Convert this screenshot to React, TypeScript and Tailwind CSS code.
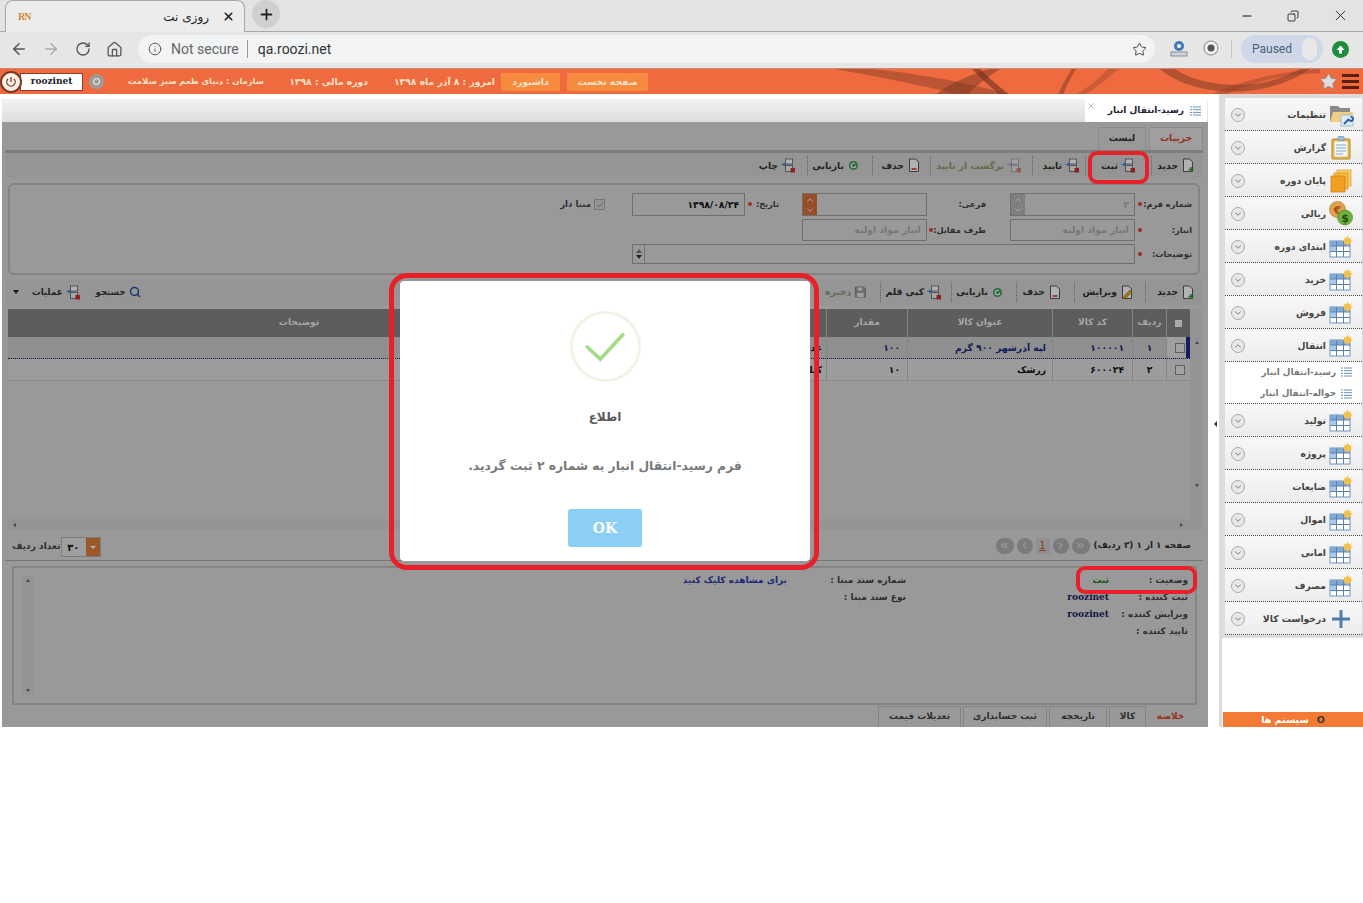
import { ArrowLeft, ArrowRight, RotateCw, Home, Info, Star, Minus, Copy, X, Plus, ChevronDown, ChevronUp, Search, ChevronsLeft, ChevronsRight, ChevronLeft, ChevronRight, Check } from 'lucide-react'

// small toolbar glyphs
function ToolIcon({ faded }: { faded?: boolean }) {
  return (
    <svg width="15" height="15" viewBox="0 0 15 15" className={faded ? 'opacity-50' : ''}>
      <rect x="4.5" y="1" width="7" height="5" fill="#fff" stroke="#778" strokeWidth="1" />
      <rect x="4.5" y="7.5" width="7" height="6" fill="#eee" stroke="#778" strokeWidth="1" />
      <path d="M0.5 6h2V4.5l2.5 2-2.5 2V7h-2z" fill="#2f7fd0" />
      <rect x="9.5" y="10" width="4.5" height="4.5" fill="#c9302c" />
    </svg>
  )
}

function NewIcon() {
  return (
    <svg width="14" height="15" viewBox="0 0 14 15">
      <path d="M2.5 1h6l3 3v9.5h-9z" fill="#fff" stroke="#556" strokeWidth="1" />
      <path d="M10 9v5M7.5 11.5h5" stroke="#2e9e3e" strokeWidth="1.6" />
    </svg>
  )
}

function DeleteIcon() {
  return (
    <svg width="14" height="15" viewBox="0 0 14 15">
      <path d="M2.5 1h6l3 3v9.5h-9z" fill="#fff" stroke="#556" strokeWidth="1" />
      <path d="M4.5 11h5" stroke="#d9302c" strokeWidth="1.6" />
    </svg>
  )
}

function RefreshIcon() {
  return (
    <svg width="13" height="13" viewBox="0 0 13 13">
      <circle cx="6.5" cy="6.5" r="4.5" fill="#3f9e56" />
      <path d="M8.7 6.5a2.2 2.2 0 1 1-1-1.8" fill="none" stroke="#fff" strokeWidth="1.2" />
    </svg>
  )
}

function EditIcon() {
  return (
    <svg width="15" height="15" viewBox="0 0 15 15">
      <path d="M2.5 1h6l3 3v9.5h-9z" fill="#fff" stroke="#556" strokeWidth="1" />
      <path d="M3 14l1-3 6-6 2 2-6 6z" fill="#e6a817" stroke="#8a6510" strokeWidth="0.5" />
    </svg>
  )
}

function SaveIcon() {
  return (
    <svg width="14" height="14" viewBox="0 0 14 14" className="opacity-60">
      <path d="M1.5 1.5h9l2 2v9h-11z" fill="#777" stroke="#444" />
      <rect x="4" y="2" width="5" height="3.5" fill="#eee" />
      <rect x="3.5" y="8" width="7" height="4.5" fill="#eee" />
    </svg>
  )
}

function ListIcon() {
  return (
    <svg width="11" height="10" viewBox="0 0 11 10">
      <path d="M0 1h2M3 1h8M0 3.7h2M3 3.7h8M0 6.4h2M3 6.4h8M0 9h2M3 9h8" stroke="#6a8fb5" strokeWidth="1" />
    </svg>
  )
}

// sidebar glyphs
function TableIcon() {
  return (
    <svg width="24" height="22" viewBox="0 0 24 22">
      <rect x="1" y="5" width="20" height="16" fill="#fff" stroke="#6f92b8" />
      <rect x="1" y="5" width="20" height="5" fill="#7fa9d6" />
      <rect x="1" y="10" width="6.5" height="5.5" fill="#a9c8ea" />
      <path d="M1 10h20M1 15.5h20M7.5 5v16M14.5 5v16" stroke="#5a82ad" strokeWidth="1" />
      <circle cx="18.5" cy="5" r="3.6" fill="#f2c24a" />
      <path d="M18.5 0v10M13.5 5h10M15 1.5l7 7M22 1.5l-7 7" stroke="#f2c24a" strokeWidth="1" />
    </svg>
  )
}

function SettingsIcon() {
  return (
    <svg width="25" height="24" viewBox="0 0 25 24">
      <path d="M1 3h8l2 2h10v14H1z" fill="#8a8a8a" />
      <path d="M1 19l3-10h20l-3 10z" fill="#f0cf85" />
      <rect x="12" y="12" width="12" height="11" fill="#dcebf8" stroke="#9ab" strokeWidth="0.7" />
      <path d="M15 21l5-5M20 16a2 2 0 1 0 1.5-2" stroke="#2e62a8" strokeWidth="2" fill="none" />
    </svg>
  )
}

function ReportIcon() {
  return (
    <svg width="20" height="24" viewBox="0 0 20 24">
      <rect x="1" y="3" width="18" height="20" rx="1" fill="#e3b94f" stroke="#b28a28" />
      <rect x="3.5" y="5.5" width="13" height="15" fill="#f4f8fb" />
      <path d="M5 9h10M5 12h10M5 15h10M5 18h7" stroke="#7fa6c4" strokeWidth="1" />
      <rect x="7" y="0.5" width="6" height="4" rx="1" fill="#9cc0dd" stroke="#6f92b0" strokeWidth="0.7" />
    </svg>
  )
}

function StackIcon() {
  return (
    <svg width="22" height="24" viewBox="0 0 22 24">
      <rect x="7" y="1" width="14" height="16" fill="#f7cf6a" stroke="#d39b2c" strokeWidth="0.7" />
      <rect x="4" y="4" width="14" height="16" fill="#f6bb44" stroke="#d3902c" strokeWidth="0.7" />
      <rect x="1" y="7" width="14" height="16" fill="#f2a01f" stroke="#c97f14" strokeWidth="0.7" />
    </svg>
  )
}

function CoinsIcon() {
  return (
    <svg width="24" height="25" viewBox="0 0 24 25">
      <circle cx="8.5" cy="8.5" r="8" fill="#e0a24c" stroke="#b67a2a" strokeWidth="0.7" />
      <text x="8.5" y="12.5" fontSize="11" fontWeight="700" textAnchor="middle" fill="#a8481c">€</text>
      <circle cx="16" cy="16.5" r="7.5" fill="#6fb03c" stroke="#4b8a24" strokeWidth="0.7" />
      <text x="16" y="20.5" fontSize="11" fontWeight="700" textAnchor="middle" fill="#1d4d12">$</text>
    </svg>
  )
}

function PlusIcon() {
  return (
    <svg width="20" height="18" viewBox="0 0 20 18">
      <path d="M0 9h18M9 0v18" stroke="#4e7da8" strokeWidth="3" transform="translate(1 0)" />
    </svg>
  )
}

const toolbar1 = [
  { label: 'جدید', icon: <NewIcon />, w: 'w-[49px]', pr: 'pr-[5px]' },
  { label: 'ثبت', icon: <ToolIcon />, w: 'w-[66px]', pr: 'pr-[15px]' },
  { label: 'تایید', icon: <ToolIcon />, w: 'w-[53px]', pr: 'pr-[5px]' },
  { label: 'برگشت از تایید', icon: <ToolIcon faded />, w: 'w-[102px]', pr: 'pr-[10px]', faded: true },
  { label: 'حذف', icon: <DeleteIcon />, w: 'w-[58px]', pr: 'pr-[9px]' },
  { label: 'بازیابی', icon: <RefreshIcon />, w: 'w-[65px]', pr: 'pr-[12px]' },
  { label: 'چاپ', icon: <ToolIcon />, w: 'w-[55px]', pr: 'pr-[11px]', last: true },
]

const toolbar2 = [
  { label: 'جدید', icon: <NewIcon />, w: 'w-[55px]', pr: 'pr-[5px]' },
  { label: 'ویرایش', icon: <EditIcon />, w: 'w-[71px]', pr: 'pr-[10px]' },
  { label: 'حذف', icon: <DeleteIcon />, w: 'w-[58px]', pr: 'pr-[12px]' },
  { label: 'بازیابی', icon: <RefreshIcon />, w: 'w-[65px]', pr: 'pr-[12px]' },
  { label: 'کپی قلم', icon: <ToolIcon />, w: 'w-[71px]', pr: 'pr-[9px]' },
  { label: 'ذخیره', icon: <SaveIcon />, w: 'w-[55px]', pr: 'pr-[13px]', faded: true, last: true },
]

const menu = [
  { label: 'تنظیمات', icon: <SettingsIcon /> },
  { label: 'گزارش', icon: <ReportIcon /> },
  { label: 'پایان دوره', icon: <StackIcon /> },
  { label: 'ریالی', icon: <CoinsIcon /> },
  { label: 'ابتدای دوره', icon: <TableIcon /> },
  { label: 'خرید', icon: <TableIcon /> },
  { label: 'فروش', icon: <TableIcon /> },
  { label: 'انتقال', icon: <TableIcon />, open: true },
  { label: 'تولید', icon: <TableIcon /> },
  { label: 'پروژه', icon: <TableIcon /> },
  { label: 'ضایعات', icon: <TableIcon /> },
  { label: 'اموال', icon: <TableIcon /> },
  { label: 'امانی', icon: <TableIcon /> },
  { label: 'مصرف', icon: <TableIcon /> },
  { label: 'درخواست کالا', icon: <PlusIcon /> },
]

function ToolbarItem({ label, icon, w, pr, faded, last }: { label: string; icon: React.ReactNode; w: string; pr: string; faded?: boolean; last?: boolean }) {
  return (
    <div className={`${w} ${pr} h-[19px] shrink-0 flex items-center gap-[3px] ${last ? '' : 'border-l border-dotted border-[#888]'}`}>
      {icon}
      <span className={`text-[9.2px] font-bold whitespace-nowrap ${faded ? 'text-[#8d9a70]' : 'text-[#333]'}`}>{label}</span>
    </div>
  )
}

function Label({ text, w, pr, dot = true }: { text: string; w: string; pr: string; dot?: boolean }) {
  return (
    <div className={`${w} ${pr} pl-[3px] shrink-0 flex items-center justify-between text-[8.2px] font-bold text-[#444] whitespace-nowrap`}>
      <span>{text}</span>
      {dot && <span className="w-[4px] h-[4px] shrink-0 rounded-full bg-[#e0402a]" />}
    </div>
  )
}

function Input({ w, h = 'h-[22px]', value, strong, children }: { w: string; h?: string; value?: string; strong?: boolean; children?: React.ReactNode }) {
  return (
    <div className={`${w} ${h} shrink-0 border border-[#9f9f9f] bg-[#dcdcdc] flex items-center justify-between pr-[5px] text-[9.2px] font-bold ${strong ? 'text-[#111]' : 'text-[#aaa]'}`}>
      <span className="whitespace-nowrap">{value}</span>
      {children}
    </div>
  )
}

function GridCell({ w, children, className = '' }: { w: string; children?: React.ReactNode; className?: string }) {
  return <div className={`${w} shrink-0 h-full flex items-center border-l border-[#bdbdbd] ${className}`}>{children}</div>
}

export default function App() {
  return (
    <div className="relative w-[1363px] h-[903px] bg-white overflow-hidden font-['DejaVu_Sans',sans-serif]">
      {/* browser tab strip */}
      <div className="h-[32px] bg-[#e3e3e3] flex items-end pl-[5px] border-b border-[#a8a8a8]">
        <div className="w-[240px] h-[32px] -mb-px bg-[#ececec] rounded-t-[8px] border border-b-0 border-[#a8a8a8] flex items-center pl-[12px] pr-[9px]">
          <span className="text-[10px] font-bold text-[#d08a3c] tracking-[-1px] font-['Liberation_Serif',serif]">RN</span>
          <span className="ml-auto text-[12px] text-[#222] mr-[13px]" dir="rtl">روزی نت</span>
          <X size={13} strokeWidth={3} className="text-[#222]" />
        </div>
        <div className="w-[28px] h-[28px] rounded-full bg-[#d0d0d0] ml-[7px] mb-[3px] flex items-center justify-center">
          <Plus size={17} strokeWidth={2.5} className="text-[#222]" />
        </div>
        <div className="ml-auto h-full flex items-center text-[#111]">
          <Minus size={14} strokeWidth={1.8} className="mr-[33px]" />
          <Copy size={12} strokeWidth={1.6} className="mr-[33px] -scale-x-100" />
          <X size={17} strokeWidth={1.2} className="mr-[14px]" />
        </div>
      </div>

      {/* address bar */}
      <div className="h-[36px] bg-[#e6e6e6] flex items-center pl-[10px] pb-[2px] text-[#555] font-['Roboto',sans-serif]">
        <ArrowLeft size={18} strokeWidth={2} />
        <ArrowRight size={18} strokeWidth={2} className="ml-[14px] text-[#aaa]" />
        <RotateCw size={16} strokeWidth={2} className="ml-[15px]" />
        <Home size={17} strokeWidth={1.8} className="ml-[15px]" />
        <div className="ml-[15px] w-[1017px] h-[28px] rounded-full bg-[#f1f3f4] flex items-center pl-[10px] pr-[8px]">
          <Info size={14} strokeWidth={1.6} />
          <span className="ml-[9px] text-[14px] text-[#666]">Not secure</span>
          <span className="ml-[8px] w-px h-[18px] bg-[#999]" />
          <span className="ml-[10px] text-[14px] text-[#333]">qa.roozi.net</span>
          <Star size={15} strokeWidth={1.6} className="ml-auto text-[#444]" />
        </div>
        <svg width="18" height="18" viewBox="0 0 18 18" className="ml-[15px]">
          <circle cx="9" cy="6" r="5" fill="#3f78b8" />
          <rect x="1" y="12" width="16" height="4" fill="#d0d4d8" stroke="#557" strokeWidth="0.6" />
          <circle cx="9" cy="6" r="2" fill="#fff" />
        </svg>
        <svg width="18" height="18" viewBox="0 0 18 18" className="ml-[14px]">
          <circle cx="9" cy="8" r="7" fill="#eee" stroke="#888" />
          <circle cx="9" cy="8" r="3.5" fill="#555" />
        </svg>
        <span className="ml-[11px] w-px h-[18px] bg-[#c4c4c4]" />
        <div className="ml-[9px] w-[82px] h-[28px] rounded-full bg-[#cfd8e6] flex items-center pl-[11px] text-[12px] text-[#48627f]">
          Paused
          <span className="ml-[10px] w-[15px] h-[22px] rounded-full bg-[#e8e8e8]" />
        </div>
        <div className="ml-[9px] w-[17px] h-[17px] rounded-full bg-[#1e8e3e] flex items-center justify-center">
          <svg width="9" height="9" viewBox="0 0 9 9"><path d="M4.5 0.5L8.5 5H6v3.5H3V5H0.5z" fill="#fff" /></svg>
        </div>
      </div>

      {/* app header */}
      <div className="relative h-[26px] bg-[#ef6a3e] border-t border-[#c98872] flex items-center overflow-hidden">
        <svg width="1363" height="26" viewBox="0 0 1363 26" className="absolute left-0 top-0">
          <path d="M835 0C880 8 930 18 960 26H1010C975 14 900 2 870 0z" fill="#8a3f28" opacity="0.5" />
          <path d="M935 26C950 14 975 4 990 0L1000 0C985 10 972 20 968 26z" fill="#7a3722" opacity="0.5" />
          <path d="M980 0C990 10 1002 20 1010 26L1000 26C990 18 980 8 972 0z" fill="#6d3120" opacity="0.6" />
          <path d="M1058 26C1062 16 1068 6 1072 0L1076 0C1071 8 1066 18 1063 26z" fill="#7a3722" opacity="0.5" />
          <path d="M1085 26C1100 16 1112 6 1118 0L1108 0C1100 8 1090 18 1075 26z" fill="#a24a2e" opacity="0.45" />
          <path d="M1160 0C1190 26 1260 34 1310 0L1300 0C1260 24 1200 18 1175 0z" fill="#7a3722" opacity="0.5" />
          <path d="M1225 26C1250 14 1280 6 1320 4L1320 0C1280 2 1240 12 1210 26z" fill="#8a3f28" opacity="0.4" />
        </svg>
        <div className="relative flex items-center w-full h-full">
          <div className="w-[22px] h-[22px] rounded-full bg-[#fdf1e6] border-2 border-[#7a3a24] flex items-center justify-center z-10">
            <svg width="12" height="12" viewBox="0 0 12 12"><path d="M6 1v5M3 3a4.2 4.2 0 1 0 6 0" fill="none" stroke="#6d3120" strokeWidth="1.2" /></svg>
          </div>
          <div className="w-[63px] h-[18px] -ml-[2px] bg-white border border-[#8a3f28] flex items-center justify-center text-[9px] font-bold font-['DejaVu_Serif',serif] text-[#222]">roozinet</div>
          <div className="ml-[6px] w-[15px] h-[15px] rounded-full bg-[#a09a96] flex items-center justify-center">
            <span className="w-[7px] h-[7px] rounded-full border border-white" />
          </div>
          <span className="ml-[24px] w-[136px] text-center text-[8.4px] font-bold text-[#fbe3c8] whitespace-nowrap" dir="rtl">سازمان : دنیای طعم سبز سلامت</span>
          <span className="ml-[26px] w-[78px] text-center text-[9.2px] font-bold text-[#fbe3c8] whitespace-nowrap" dir="rtl">دوره مالی : ۱۳۹۸</span>
          <span className="ml-[25px] w-[103px] text-center text-[9.2px] font-bold text-[#fbe3c8] whitespace-nowrap" dir="rtl">امروز : ۸ آذر ماه ۱۳۹۸</span>
          <div className="ml-[5px] w-[59px] h-[18px] bg-[#f68a3e] flex items-center justify-center text-[9.2px] font-bold text-[#fbe3c8]">داشبورد</div>
          <div className="ml-[7px] w-[81px] h-[18px] bg-[#f68a3e] flex items-center justify-center text-[9.2px] font-bold text-[#fbe3c8]">صفحه نخست</div>
          <Star size={19} strokeWidth={1} className="ml-auto text-[#888] fill-[#ddd]" />
          <div className="ml-[4px] mr-[4px] w-[17px] flex flex-col gap-[3px]">
            <span className="h-[3px] bg-[#5a1f14]" />
            <span className="h-[3px] bg-[#5a1f14]" />
            <span className="h-[3px] bg-[#5a1f14]" />
          </div>
        </div>
      </div>

      {/* app body */}
      <div className="h-[633px] flex pl-[2px]" dir="ltr">
        <div className="w-[1206px] flex flex-col" dir="rtl">
          <div className="h-[5px]" />
          {/* open pages strip */}
          <div className="h-[23px] bg-gradient-to-b from-[#f2f2f2] to-[#dddddd] flex pr-[1px]">
            <div className="w-[122px] h-full bg-white flex items-center pr-[6px] gap-[6px] relative">
              <ListIcon />
              <span className="text-[9px] font-bold text-[#223] whitespace-nowrap">رسید-انتقال انبار</span>
              <X size={10} strokeWidth={1.5} className="absolute left-[1px] top-[2px] text-[#999]" />
            </div>
          </div>

          {/* page, dimmed by the modal backdrop */}
          <div className="relative flex-1 bg-[#dbdbdb] flex flex-col pl-[3px] pr-[5px] overflow-hidden">
            <div className="h-[28px] flex items-end gap-[3px] border-b-[3px] border-[#b4b4b4] box-content">
              <div className="w-[54px] h-[23px] pb-[2px] bg-[#e4e4e4] border border-b-0 border-[#c8c8c8] flex items-center justify-center text-[9.2px] font-bold text-[#d8472e]">جزییات</div>
              <div className="w-[48px] h-[23px] pb-[2px] bg-[#dcdcdc] border border-b-0 border-[#c8c8c8] flex items-center justify-center text-[9.2px] font-bold text-[#333]">لیست</div>
            </div>
            <div className="h-[25px] bg-[#d6d6d6] flex items-center pr-[3px]">
              {toolbar1.map(t => <ToolbarItem key={t.label} {...t} />)}
            </div>

            <div className="mt-[5px] mx-[3px] h-[92px] border-[2px] border-[#bdbdbd] rounded-[6px] flex flex-col gap-[3px] pt-[8px] pr-[6px]">
              <div className="flex items-center">
                <Label text="شماره فرم:" w="w-[57px]" pr="pr-0" />
                <Input w="w-[125px]" h="h-[23px]" value="۲">
                  <div className="w-[14px] h-full bg-[#b5b5b5] flex flex-col items-center justify-center text-white">
                    <ChevronUp size={10} /><ChevronDown size={10} />
                  </div>
                </Input>
                <Label text="فرعی:" w="w-[83px]" pr="pr-[24px]" dot={false} />
                <Input w="w-[125px]" h="h-[23px]">
                  <div className="w-[14px] h-full bg-[#d8703c] flex flex-col items-center justify-center text-white">
                    <ChevronUp size={10} /><ChevronDown size={10} />
                  </div>
                </Input>
                <Label text="تاریخ:" w="w-[57px]" pr="pr-[23px]" />
                <Input w="w-[113px]" h="h-[23px]" value="۱۳۹۸/۰۸/۲۴" strong />
                <div className="mr-[27px] w-[11px] h-[11px] border border-[#aaa] bg-[#d5d5d5] flex items-center justify-center">
                  <Check size={8} strokeWidth={2} className="text-[#666]" />
                </div>
                <span className="mr-[3px] text-[8.6px] font-bold text-[#444] whitespace-nowrap">مبنا دار</span>
              </div>
              <div className="flex items-center">
                <Label text="انبار:" w="w-[57px]" pr="pr-0" />
                <Input w="w-[125px]" value="انبار مواد اولیه" />
                <Label text="طرف مقابل:" w="w-[83px]" pr="pr-[24px]" />
                <Input w="w-[125px]" value="انبار مواد اولیه" />
              </div>
              <div className="flex items-center">
                <Label text="توضیحات:" w="w-[57px]" pr="pr-0" />
                <Input w="w-[503px]" h="h-[20px]">
                  <div className="w-[12px] h-full flex flex-col items-center justify-center border-r border-[#aaa]">
                    <span className="w-0 h-0 border-x-[3px] border-x-transparent border-b-[4px] border-b-[#777]" />
                    <span className="mt-[2px] w-0 h-0 border-x-[3px] border-x-transparent border-t-[4px] border-t-[#333]" />
                  </div>
                </Input>
              </div>
            </div>

            <div className="mt-[4px] h-[26px] bg-[#d6d6d6] flex items-center pr-[3px]">
              {toolbar2.map(t => <ToolbarItem key={t.label} {...t} />)}
              <div className="mr-auto flex items-center pl-[8px] gap-[3px]">
                <Search size={12} strokeWidth={3} className="text-[#1f4f9e]" />
                <span className="text-[8.6px] font-bold text-[#333]">جستجو</span>
                <span className="w-[9px]" />
                <ToolIcon />
                <span className="text-[8.6px] font-bold text-[#333]">عملیات</span>
                <span className="mr-[10px] w-0 h-0 border-x-[3px] border-x-transparent border-t-[4px] border-t-[#222]" />
              </div>
            </div>

            {/* grid */}
            <div className="mt-[4px] ml-[3px] h-[221px] flex flex-col bg-[#dbdbdb] relative">
              <div className="flex-1 flex">
                <div className="w-[13px] shrink-0 bg-[#d4d4d4] flex flex-col items-center justify-between py-[32px]">
                  <span className="w-0 h-0 border-x-[2px] border-x-transparent border-b-[3px] border-b-[#666]" />
                  <span className="w-0 h-0 border-x-[2px] border-x-transparent border-t-[3px] border-t-[#666]" />
                </div>
                <div className="flex-1 min-w-0 flex flex-col relative">
                  <div className="h-[28px] bg-[#868686] flex text-[9px] font-bold text-[#ececec]">
                    <GridCell w="w-[24px]" className="justify-center"><span className="w-[7px] h-[7px] bg-[#f4f4f4]" /></GridCell>
                    <GridCell w="w-[34px]" className="justify-center">ردیف</GridCell>
                    <GridCell w="w-[80px]" className="justify-center">کد کالا</GridCell>
                    <GridCell w="w-[145px]" className="justify-center">عنوان کالا</GridCell>
                    <GridCell w="w-[81px]" className="justify-center">مقدار</GridCell>
                    <GridCell w="w-[236px]" />
                    <div className="flex-1 flex items-center justify-center">توضیحات</div>
                  </div>
                  <div className="h-[22px] bg-[#cdcdcd] flex border-b border-dotted border-[#1a2466] text-[9.2px] font-bold text-[#1c2a7c]">
                    <GridCell w="w-[24px]" className="justify-center bg-[#e4e4e4] relative">
                      <span className="w-[10px] h-[10px] border border-[#8a8a8a] bg-[#e8e8e8] ml-[3px]" />
                      <span className="absolute right-0 top-0 bottom-0 w-[4px] bg-[#1a2a8a]" />
                    </GridCell>
                    <GridCell w="w-[34px]" className="justify-center">۱</GridCell>
                    <GridCell w="w-[80px]" className="pr-[8px] tracking-[1px]">۱۰۰۰۰۱</GridCell>
                    <GridCell w="w-[145px]" className="pr-[6px] whitespace-nowrap">لپه آذرشهر ۹۰۰ گرم</GridCell>
                    <GridCell w="w-[81px]" className="pr-[7px] tracking-[1px]">۱۰۰</GridCell>
                    <GridCell w="w-[236px]" className="pr-[4px] text-[#111]">عدد</GridCell>
                  </div>
                  <div className="h-[22px] bg-[#e0e0e0] flex border-b border-[#c4c4c4] text-[9.2px] font-bold text-[#111]">
                    <GridCell w="w-[24px]" className="justify-center">
                      <span className="w-[10px] h-[10px] border border-[#8a8a8a] bg-[#e8e8e8] ml-[3px]" />
                    </GridCell>
                    <GridCell w="w-[34px]" className="justify-center">۲</GridCell>
                    <GridCell w="w-[80px]" className="pr-[8px] tracking-[1px]">۶۰۰۰۲۴</GridCell>
                    <GridCell w="w-[145px]" className="pr-[6px]">زرشک</GridCell>
                    <GridCell w="w-[81px]" className="pr-[7px] tracking-[1px]">۱۰</GridCell>
                    <GridCell w="w-[236px]" className="pr-[4px]">کیلو</GridCell>
                  </div>
                </div>
              </div>
              <div className="h-[11px] bg-[#d4d4d4] flex items-center justify-between pr-[20px] pl-[5px]">
                <span className="w-0 h-0 border-y-[2px] border-y-transparent border-l-[3px] border-l-[#666]" />
                <span className="w-0 h-0 border-y-[2px] border-y-transparent border-r-[3px] border-r-[#666]" />
              </div>
            </div>

            {/* pager */}
            <div className="h-[31px] flex items-center border-b border-[#aaa] pr-[12px] pl-[7px] pt-[1px]">
              <span className="text-[8.8px] font-bold text-[#333] whitespace-nowrap" dir="rtl">صفحه ۱ از ۱ (۲ ردیف)</span>
              <div className="mr-[4px] flex items-center gap-[3px] text-white">
                <span className="w-[18px] h-[16px] rounded-full bg-[#b0b0b0] flex items-center justify-center"><ChevronsRight size={11} /></span>
                <span className="w-[16px] h-[16px] rounded-full bg-[#b0b0b0] flex items-center justify-center"><ChevronRight size={11} /></span>
                <span className="w-[14px] h-[16px] bg-[#cfcfcf] flex items-center justify-center text-[10px] text-[#c8552c] underline">1</span>
                <span className="w-[16px] h-[16px] rounded-full bg-[#b0b0b0] flex items-center justify-center"><ChevronLeft size={11} /></span>
                <span className="w-[18px] h-[16px] rounded-full bg-[#b0b0b0] flex items-center justify-center"><ChevronsLeft size={11} /></span>
              </div>
              <div className="mr-auto flex items-center gap-[1px] mt-[3px]">
                <div className="w-[40px] h-[20px] border border-[#b4b4b4] bg-[#e2e2e2] flex items-center">
                  <div className="w-[14px] h-full bg-[#e07e3c] flex items-center justify-center">
                    <span className="w-0 h-0 border-x-[3px] border-x-transparent border-t-[3px] border-t-white" />
                  </div>
                  <span className="text-[10px] font-bold text-[#111] mr-[7px]">۳۰</span>
                </div>
                <span className="text-[9px] font-bold text-[#444] whitespace-nowrap">تعداد ردیف</span>
              </div>
            </div>

            {/* document info */}
            <div className="mt-[5px] h-[139px] border-[2px] border-[#bdbdbd] flex mr-[6px] ml-[7px] text-[9px] font-bold text-[#444]">
              <div className="w-[289px] shrink-0 pt-[5px] pr-[7px] flex flex-col gap-[2px]">
                <div className="h-[15px] flex items-center"><span className="w-[79px]">وضعیت :</span><span className="text-[#1f7a1f]">ثبت</span></div>
                <div className="h-[15px] flex items-center"><span className="w-[79px]">ثبت کننده :</span><span className="font-['DejaVu_Serif',serif] text-[#1c2460]">roozinet</span></div>
                <div className="h-[15px] flex items-center"><span className="w-[79px]">ویرایش کننده :</span><span className="font-['DejaVu_Serif',serif] text-[#1c2460]">roozinet</span></div>
                <div className="h-[15px] flex items-center"><span>تایید کننده :</span></div>
              </div>
              <div className="w-[119px] shrink-0 pt-[5px] flex flex-col gap-[2px]">
                <div className="h-[15px] flex items-center whitespace-nowrap">شماره سند مبنا :</div>
                <div className="h-[15px] flex items-center whitespace-nowrap">نوع سند مبنا :</div>
              </div>
              <div className="pt-[5px]">
                <div className="h-[15px] flex items-center text-[#2a3aa8] whitespace-nowrap">برای مشاهده کلیک کنید</div>
              </div>
              <div className="mr-auto ml-[8px] w-[12px] my-[8px] bg-[#d4d4d4] flex flex-col items-center justify-between py-[3px]">
                <span className="w-0 h-0 border-x-[2px] border-x-transparent border-b-[3px] border-b-[#666]" />
                <span className="w-0 h-0 border-x-[2px] border-x-transparent border-t-[3px] border-t-[#666]" />
              </div>
            </div>

            {/* bottom tabs */}
            <div className="flex-1 flex items-end pr-[10px] gap-[2px] text-[9px] font-bold text-[#444]">
              <div className="w-[45px] h-[21px] flex items-center justify-center text-[#d8472e]">خلاصه</div>
              <div className="w-[37px] h-[21px] border border-b-0 border-[#bdbdbd] flex items-center justify-center">کالا</div>
              <div className="w-[58px] h-[21px] border border-b-0 border-[#bdbdbd] flex items-center justify-center">تاریخچه</div>
              <div className="w-[84px] h-[21px] border border-b-0 border-[#bdbdbd] flex items-center justify-center whitespace-nowrap">ثبت حسابداری</div>
              <div className="w-[83px] h-[21px] border border-b-0 border-[#bdbdbd] flex items-center justify-center whitespace-nowrap">تعدیلات قیمت</div>
            </div>

            <div className="absolute inset-0 bg-black/30" />
          </div>
        </div>

        {/* splitter */}
        <div className="w-[14px] flex justify-end relative">
          <span className="absolute left-[6px] top-[327px] w-0 h-0 border-y-[3px] border-y-transparent border-l-[3px] border-l-[#333] -scale-x-100" />
          <span className="w-[3px] h-full bg-[#dcdcdc]" />
        </div>

        {/* side menu */}
        <div className="flex-1 flex flex-col" dir="rtl">
          <div className="pt-[4px] pl-[3px] pr-[1px] bg-[#dcdcdc] pb-[3px]">
            {menu.map(m => (
              <div key={m.label}>
                <div className="h-[33px] pt-[1px] bg-gradient-to-b from-[#f8f8f8] to-[#ececec] border-b border-dotted border-[#444] flex items-center pr-[8px] pl-[6px]">
                  <div className="w-[26px] flex justify-center shrink-0">{m.icon}</div>
                  <span className="mr-[2px] text-[9.2px] font-bold text-[#444] whitespace-nowrap">{m.label}</span>
                  <span className="mr-auto w-[14px] h-[14px] rounded-full border border-[#aaa] bg-[#e8e8e8] flex items-center justify-center text-[#666]">
                    {m.open ? <ChevronUp size={10} /> : <ChevronDown size={10} />}
                  </span>
                </div>
                {m.open && (
                  <div className="h-[42px] bg-white border-b border-dotted border-[#444] flex flex-col justify-center gap-[8px] pr-[10px] pt-[1px] text-[8.8px] font-bold text-[#777]">
                    <div className="flex items-center gap-[5px]"><ListIcon /><span>رسید-انتقال انبار</span></div>
                    <div className="flex items-center gap-[5px]"><ListIcon /><span>حواله-انتقال انبار</span></div>
                  </div>
                )}
              </div>
            ))}
          </div>
          <div className="flex-1" />
          <div className="h-[15px] ml-[1px] bg-[#f47b36] flex items-center justify-center text-[9.5px] leading-[13px] font-bold text-white gap-[8px]">
            <span className="text-[#333]">O</span><span>سیستم ها</span>
          </div>
        </div>
      </div>

      {/* red annotation frames */}
      <div className="absolute left-[1088px] top-[151px] w-[61px] h-[33px] border-[4px] border-[#e8202a] rounded-[9px]" />
      <div className="absolute left-[1076px] top-[566px] w-[121px] h-[28px] border-[4px] border-[#e8202a] rounded-[9px]" />
      <div className="absolute left-[389px] top-[273px] w-[430px] h-[297px] border-[5px] border-[#e8202a] rounded-[18px]" />

      {/* alert */}
      <div className="absolute left-[400px] top-[281px] w-[410px] h-[280px] bg-white rounded-[4px] flex flex-col items-center pt-[30px]" dir="rtl">
        <div className="w-[71px] h-[71px] rounded-full border-[3px] border-[#eef5e6] flex items-center justify-center">
          <svg width="42" height="30" viewBox="0 0 44 32"><path d="M3 16l14 13L41 3" fill="none" stroke="#a5dc86" strokeWidth="4" strokeLinecap="round" /></svg>
        </div>
        <div className="mt-[26px] text-[12px] font-bold text-[#595959]">اطلاع</div>
        <div className="mt-[31px] text-[12.3px] font-bold text-[#797979] whitespace-nowrap">فرم رسید-انتقال انبار به شماره ۲ ثبت گردید.</div>
        <div className="mt-[34px] w-[74px] h-[38px] rounded-[3px] bg-[#8ccff5] flex items-center justify-center text-[14px] font-bold text-white font-['DejaVu_Serif',serif]">OK</div>
      </div>
    </div>
  )
}
